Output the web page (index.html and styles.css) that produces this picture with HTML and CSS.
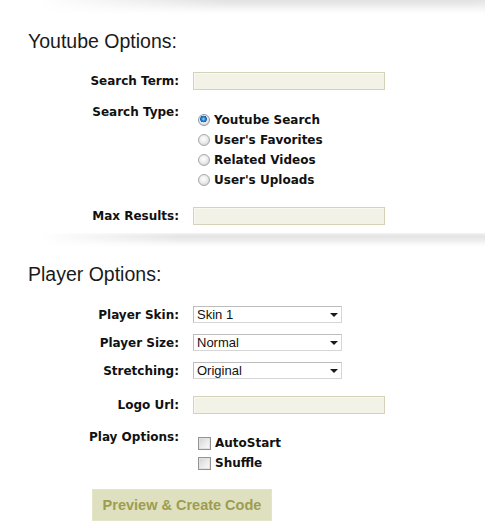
FILE: index.html
```html
<!DOCTYPE html>
<html lang="en">
<head>
<meta charset="utf-8">
<title>Youtube Player Options</title>
<link rel="stylesheet" href="styles.css">
</head>
<body>
<div class="shade shade-top"></div>

<section class="group">
  <h2 class="group-title">Youtube Options:</h2>

  <div class="row row-field">
    <label class="row-label" for="term">Search Term:</label>
    <input class="text-field" id="term" type="text">
  </div>

  <div class="row row-list">
    <span class="row-label">Search Type:</span>
    <ul class="choice-list radio-list">
      <li><label class="choice"><input class="radio" type="radio" name="stype" checked><span>Youtube Search</span></label></li>
      <li><label class="choice"><input class="radio" type="radio" name="stype"><span>User's Favorites</span></label></li>
      <li><label class="choice"><input class="radio" type="radio" name="stype"><span>Related Videos</span></label></li>
      <li><label class="choice"><input class="radio" type="radio" name="stype"><span>User's Uploads</span></label></li>
    </ul>
  </div>

  <div class="row row-field row-max">
    <label class="row-label" for="max">Max Results:</label>
    <input class="text-field" id="max" type="text">
  </div>
</section>

<div class="shade shade-mid"></div>

<section class="group">
  <h2 class="group-title">Player Options:</h2>

  <div class="row row-field row-select row-first">
    <label class="row-label" for="skin">Player Skin:</label>
    <span class="select-box"><select id="skin"><option>Skin 1</option><option>Skin 2</option></select></span>
  </div>

  <div class="row row-field row-select">
    <label class="row-label" for="size">Player Size:</label>
    <span class="select-box"><select id="size"><option>Normal</option><option>Large</option></select></span>
  </div>

  <div class="row row-field row-select">
    <label class="row-label" for="stretch">Stretching:</label>
    <span class="select-box"><select id="stretch"><option>Original</option><option>Fit</option></select></span>
  </div>

  <div class="row row-field row-logo">
    <label class="row-label" for="logo">Logo Url:</label>
    <input class="text-field" id="logo" type="text">
  </div>

  <div class="row row-list row-play">
    <span class="row-label">Play Options:</span>
    <ul class="choice-list check-list">
      <li><label class="choice"><input class="check" type="checkbox"><span>AutoStart</span></label></li>
      <li><label class="choice"><input class="check" type="checkbox"><span>Shuffle</span></label></li>
    </ul>
  </div>

  <button class="create-btn" type="button">Preview &amp; Create Code</button>
</section>
</body>
</html>
```

FILE: styles.css
```css
* { box-sizing: border-box; }

html, body {
  margin: 0;
  padding: 0;
  background: #ffffff;
}

body {
  font-family: "DejaVu Sans", Verdana, sans-serif;
  color: #111111;
  width: 485px;
  height: 531px;
  overflow: hidden;
}

/* soft panel shadows */
.shade {
  height: 14px;
  background:
    linear-gradient(to right, #ffffff 0, rgba(255,255,255,0) 190px, rgba(255,255,255,0) 430px, rgba(255,255,255,0.5) 485px),
    linear-gradient(to bottom, #e1e1e1 0, #e9e9e9 4px, #f6f6f6 9px, #ffffff 14px);
  margin-left: 40px;
}

.shade-mid {
  margin-top: 8px;
  background:
    linear-gradient(to right, #ffffff 0, rgba(255,255,255,0) 140px),
    linear-gradient(to bottom, #f4f4f4 0, #e4e4e4 3px, #ececec 7px, #f9f9f9 11px, #ffffff 14px);
}

.group {
  padding-left: 28px;
}

.group-title {
  margin: 16px 0 0 0;
  font-family: "Liberation Sans", Arial, sans-serif;
  font-weight: normal;
  font-size: 19.5px;
  line-height: 23px;
  color: #1a1a1a;
}

.row {
  display: grid;
  grid-template-columns: 151px 1fr;
  column-gap: 14px;
  margin-top: 19px;
}

.row-field {
  align-items: center;
}

.row-label {
  text-align: right;
  font-weight: bold;
  font-size: 12px;
  line-height: 16px;
  color: #111111;
}

.row-select .row-label {
  align-self: end;
  line-height: 15px;
}

.text-field {
  width: 192px;
  height: 18px;
  margin: 0;
  padding: 0 3px;
  border: 1px solid #d4d3b7;
  background: #f3f2e6;
  box-shadow: inset 1px 1px 0 #faf9f1;
  font: 12px "Liberation Sans", Arial, sans-serif;
}

.row-list {
  margin-top: 14px;
  align-items: start;
}

.choice-list {
  list-style: none;
  margin: 0;
  padding: 6px 0 0 0;
}

.choice {
  display: flex;
  align-items: center;
  height: 20px;
  font-weight: bold;
  font-size: 12px;
  color: #111111;
}

.radio {
  appearance: none;
  -webkit-appearance: none;
  width: 12px;
  height: 12px;
  margin: 0 4px 0 5px;
  border-radius: 50%;
  border: 1px solid #a8a8a8;
  background: radial-gradient(circle at 45% 40%, #ffffff 0, #ededed 45%, #c6c6c6 100%);
}

.radio:checked {
  border-color: #8a9cb0;
  background:
    radial-gradient(circle at 45% 40%, #a6d8ff 0, #2c86d6 1.8px, #1a5fa8 3.2px, rgba(0,0,0,0) 3.6px),
    radial-gradient(circle at 45% 40%, #ffffff 0, #ededed 45%, #c6c6c6 100%);
}

.row-max {
  margin-top: 17px;
}

.row-select {
  margin-top: 11px;
}

.row-select.row-first {
  margin-top: 20px;
}

.select-box {
  position: relative;
  display: block;
  width: 149px;
  height: 17px;
}

.select-box select {
  appearance: none;
  -webkit-appearance: none;
  display: block;
  width: 149px;
  height: 17px;
  margin: 0;
  padding: 0 0 0 3px;
  border: 1px solid #bdbdbd;
  border-right-color: #d6d6d6;
  border-bottom-color: #d6d6d6;
  border-radius: 0;
  background: #ffffff;
  font: 13px/15px "Liberation Sans", Arial, sans-serif;
  color: #111111;
}

.select-box::after {
  content: "";
  position: absolute;
  right: 4px;
  top: 7px;
  border-left: 4px solid transparent;
  border-right: 4px solid transparent;
  border-top: 4px solid #1a1a1a;
  pointer-events: none;
}

.row-logo {
  margin-top: 17px;
}

.row-play {
  margin-top: 15px;
}

.row-play .choice-list {
  padding-top: 4px;
}

.check {
  appearance: none;
  -webkit-appearance: none;
  width: 13px;
  height: 13px;
  margin: 0 4px 0 5px;
  border: 1px solid #939393;
  border-radius: 0;
  background: linear-gradient(135deg, #d2d2d2 0, #ececec 55%, #fbfbfb 100%);
  box-shadow: inset 0 0 0 1px #e2e2e2;
}

.create-btn {
  display: block;
  margin: 16px 0 0 64px;
  width: 180px;
  height: 32px;
  padding: 0;
  border: 1px solid #e3e4c8;
  background: #dfe0bf;
  color: #9c9d50;
  font: bold 14.5px "Liberation Sans", Arial, sans-serif;
  text-align: center;
  cursor: pointer;
}
```
